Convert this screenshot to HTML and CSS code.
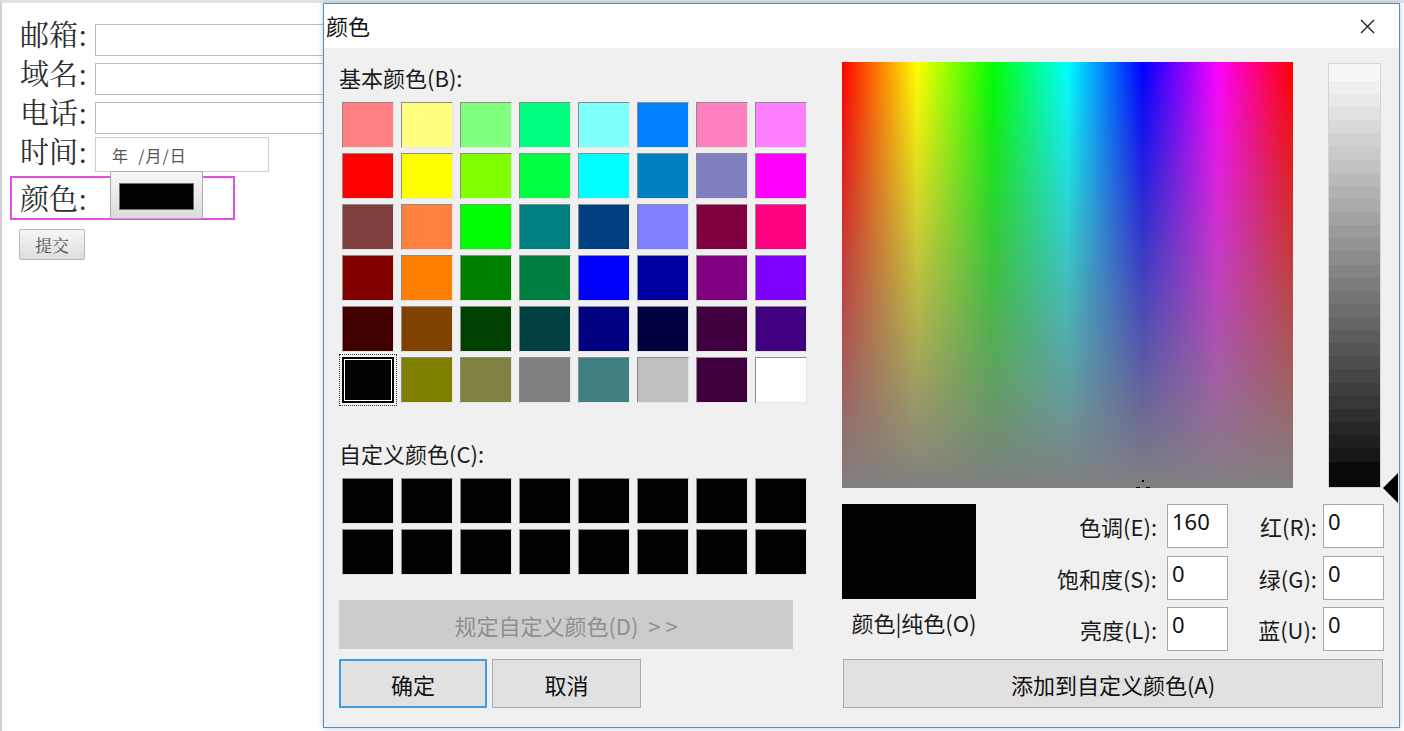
FILE: index.html
```html
<!DOCTYPE html>
<html lang="zh-CN">
<head>
<meta charset="utf-8">
<title>颜色</title>
<link rel="stylesheet" href="styles.css">
</head>
<body>
<div class="page">
  <form class="form">
    <div class="row"><span class="lbl">邮箱:</span><input class="field" type="text"></div>
    <div class="row"><span class="lbl">域名:</span><input class="field" type="text"></div>
    <div class="row"><span class="lbl">电话:</span><input class="field" type="text"></div>
    <div class="row date-row"><span class="lbl">时间:</span><span class="field date">年&nbsp;&nbsp;/月/日</span></div>
    <div class="color-row"><span class="lbl">颜色:</span><span class="color-btn"><span class="color-chip"></span></span></div>
    <button class="submit" type="button">提交</button>
  </form>
</div>

<div class="dialog">
  <div class="titlebar">
    <span class="title">颜色</span>
    <svg class="close" viewBox="0 0 15 15"><path d="M1 1L14 14M14 1L1 14" stroke="#222" stroke-width="1.4" fill="none"/></svg>
  </div>
  <div class="dlg-body">
    <div class="left">
      <div class="caption">基本颜色(B):</div>
      <div class="swatches">
        <span class="sw" style="background:#ff8080"></span>
        <span class="sw" style="background:#ffff80"></span>
        <span class="sw" style="background:#80ff80"></span>
        <span class="sw" style="background:#00ff80"></span>
        <span class="sw" style="background:#80ffff"></span>
        <span class="sw" style="background:#0080ff"></span>
        <span class="sw" style="background:#ff80c0"></span>
        <span class="sw" style="background:#ff80ff"></span>

        <span class="sw" style="background:#ff0000"></span>
        <span class="sw" style="background:#ffff00"></span>
        <span class="sw" style="background:#80ff00"></span>
        <span class="sw" style="background:#00ff40"></span>
        <span class="sw" style="background:#00ffff"></span>
        <span class="sw" style="background:#0080c0"></span>
        <span class="sw" style="background:#8080c0"></span>
        <span class="sw" style="background:#ff00ff"></span>

        <span class="sw" style="background:#804040"></span>
        <span class="sw" style="background:#ff8040"></span>
        <span class="sw" style="background:#00ff00"></span>
        <span class="sw" style="background:#008080"></span>
        <span class="sw" style="background:#004080"></span>
        <span class="sw" style="background:#8080ff"></span>
        <span class="sw" style="background:#800040"></span>
        <span class="sw" style="background:#ff0080"></span>

        <span class="sw" style="background:#800000"></span>
        <span class="sw" style="background:#ff8000"></span>
        <span class="sw" style="background:#008000"></span>
        <span class="sw" style="background:#008040"></span>
        <span class="sw" style="background:#0000ff"></span>
        <span class="sw" style="background:#0000a0"></span>
        <span class="sw" style="background:#800080"></span>
        <span class="sw" style="background:#8000ff"></span>

        <span class="sw" style="background:#400000"></span>
        <span class="sw" style="background:#804000"></span>
        <span class="sw" style="background:#004000"></span>
        <span class="sw" style="background:#004040"></span>
        <span class="sw" style="background:#000080"></span>
        <span class="sw" style="background:#000040"></span>
        <span class="sw" style="background:#400040"></span>
        <span class="sw" style="background:#400080"></span>

        <span class="sw sel" style="background:#000000"></span>
        <span class="sw" style="background:#808000"></span>
        <span class="sw" style="background:#808040"></span>
        <span class="sw" style="background:#808080"></span>
        <span class="sw" style="background:#408080"></span>
        <span class="sw" style="background:#c0c0c0"></span>
        <span class="sw" style="background:#400040"></span>
        <span class="sw" style="background:#ffffff"></span>
      </div>
      <div class="caption custom-cap">自定义颜色(C):</div>
      <div class="swatches custom">
        <span class="sw"></span><span class="sw"></span><span class="sw"></span><span class="sw"></span>
        <span class="sw"></span><span class="sw"></span><span class="sw"></span><span class="sw"></span>
        <span class="sw"></span><span class="sw"></span><span class="sw"></span><span class="sw"></span>
        <span class="sw"></span><span class="sw"></span><span class="sw"></span><span class="sw"></span>
      </div>
      <div class="btn wide">规定自定义颜色(D)&nbsp; &gt; &gt;</div>
      <div class="btn-row">
        <div class="btn ok">确定</div>
        <div class="btn cancel">取消</div>
      </div>
    </div>

    <div class="right">
      <div class="pick-row">
        <div class="spectrum">
          <svg class="cross" viewBox="0 0 20 20"><rect x="9" y="2" width="2" height="2" fill="#000"/><rect x="3" y="9" width="4" height="2" fill="#000"/><rect x="13" y="9" width="4" height="2" fill="#000"/></svg>
        </div>
        <div class="lum"><span class="arrow"></span></div>
      </div>
      <div class="mid-row">
        <div class="preview-col">
          <div class="preview"></div>
          <div class="preview-lbl">颜色|纯色(O)</div>
        </div>
        <div class="fields">
          <span class="flbl">色调(E):</span><span class="fin">160</span>
          <span class="flbl r">红(R):</span><span class="fin">0</span>
          <span class="flbl">饱和度(S):</span><span class="fin">0</span>
          <span class="flbl r">绿(G):</span><span class="fin">0</span>
          <span class="flbl">亮度(L):</span><span class="fin">0</span>
          <span class="flbl r">蓝(U):</span><span class="fin">0</span>
        </div>
      </div>
      <div class="btn add">添加到自定义颜色(A)</div>
    </div>
  </div>
</div>
</body>
</html>
```

FILE: styles.css
```css
* { box-sizing: border-box; }
html, body { margin: 0; padding: 0; }
body {
  width: 1404px;
  height: 731px;
  overflow: hidden;
  position: relative;
  background: #fff;
  font-family: "Noto Sans CJK SC", "Noto Sans", sans-serif;
}

/* ---------- page form ---------- */
.page {
  height: 731px;
  border-top: 3px solid #e2e2e2;
  border-left: 2px solid #d2d2d2;
}
.form {
  display: flex;
  flex-direction: column;
  align-items: flex-start;
  padding: 17px 0 0 8px;
  margin: 0;
}
.row {
  display: flex;
  align-items: flex-start;
  height: 39px;
  padding-left: 10px;
}
.row.date-row { height: 35px; }
.lbl {
  font-family: "Noto Serif CJK SC", "Noto Sans CJK SC", serif;
  font-size: 29px;
  line-height: 26px;
  padding-top: 1px;
  color: #2e2e2e;
  width: 75px;
  flex: none;
}
.field {
  margin: 4px 0 0 0;
  width: 240px;
  height: 32px;
  border: 1px solid #bdbdbd;
  background: #fff;
  padding: 0;
  outline: none;
}
.field.date {
  margin-top: 0;
  width: 174px;
  height: 35px;
  display: flex;
  align-items: center;
  padding-left: 16px;
  font-size: 16px;
  letter-spacing: 1px;
  color: #555;
  border-color: #cfcfcf;
}
.color-row {
  display: flex;
  align-items: flex-start;
  width: 225px;
  height: 44px;
  margin-top: 4px;
  padding-left: 8px;
  border: 2px solid #e24fe2;
}
.color-row .lbl { align-self: center; padding-top: 0; line-height: 30px; }
.color-btn {
  margin: -7px 0 0 15px;
  width: 93px;
  height: 48px;
  border: 1px solid #ababab;
  border-radius: 2px;
  background: linear-gradient(#f7f7f7, #dcdcdc);
  display: flex;
  align-items: center;
  justify-content: center;
  flex: none;
}
.color-chip {
  width: 75px;
  height: 27px;
  background: #000;
  border: 1px solid #707070;
  margin-top: 3px;
}
.submit {
  margin: 9px 0 0 9px;
  width: 66px;
  height: 31px;
  border: 1px solid #b8b8b8;
  border-radius: 2px;
  background: linear-gradient(#f6f6f6, #dedede);
  font-family: "Noto Serif CJK SC", "Noto Sans CJK SC", serif;
  font-size: 17px;
  color: #555;
  padding: 0;
}

/* ---------- dialog window ---------- */
.dialog {
  position: absolute;
  left: 323px;
  top: 3px;
  width: 1077px;
  height: 725px;
  border: 1px solid #4a92d2;
  background: #f0f0f0;
  box-shadow: 0 0 5px rgba(0, 0, 0, 0.22);
  display: flex;
  flex-direction: column;
  color: #1a1a1a;
}
.titlebar {
  flex: none;
  height: 44px;
  background: #fff;
  display: flex;
  align-items: center;
  justify-content: space-between;
  padding: 0 24px 0 2px;
}
.title { font-size: 22px; line-height: 30px; color: #111; margin-top: -2px; }
.close { width: 15px; height: 15px; display: block; }

.dlg-body {
  display: flex;
  padding: 14px 0 0 15px;
}
.left { width: 503px; flex: none; }
.caption { font-size: 22px; line-height: 30px; color: #1a1a1a; }
.swatches {
  display: grid;
  grid-template-columns: repeat(8, 52px);
  grid-auto-rows: 46px;
  column-gap: 7px;
  row-gap: 5px;
  margin: 10px 0 0 3px;
}
.sw {
  display: block;
  border: 1px solid;
  border-color: #8c8c8c #e6e6e6 #e6e6e6 #8c8c8c;
}
.sw.sel {
  border: 2px solid #000;
  box-shadow: inset 0 0 0 1px #fff;
  outline: 1px dotted #333;
  outline-offset: 2px;
}
.custom .sw { background: #000; }
.custom-cap { margin-top: 35px; }

.btn {
  height: 49px;
  display: flex;
  align-items: center;
  justify-content: center;
  font-size: 22px;
  background: #e1e1e1;
  border: 1px solid #adadad;
  color: #111;
}
.btn.wide {
  width: 454px;
  margin-top: 25px;
  background: #cccccc;
  border-color: #cccccc;
  color: #8f8f8f;
}
.btn-row { display: flex; gap: 5px; margin-top: 10px; }
.btn.ok { width: 148px; border: 2px solid #3d9ee0; }
.btn.cancel { width: 149px; }

.right { width: 542px; flex: none; }
.pick-row { display: flex; align-items: flex-start; }
.spectrum {
  position: relative;
  overflow: hidden;
  width: 451px;
  height: 426px;
  flex: none;
  background:
    linear-gradient(to bottom, rgba(128, 128, 128, 0), #808080),
    linear-gradient(to right, #ff0000, #ffff00 16.67%, #00ff00 33.33%, #00ffff 50%, #0000ff 66.67%, #ff00ff 83.33%, #ff0000);
}
.cross {
  position: absolute;
  left: 291px;
  top: 416px;
  width: 20px;
  height: 20px;
}
.lum {
  position: relative;
  margin: 1px 0 0 35px;
  width: 53px;
  height: 425px;
  flex: none;
  border: 1px solid #d4d4d4;
  background: linear-gradient(to bottom,
    rgb(248,248,248) 0 4%,
    rgb(240,240,240) 4% 7.1%,
    rgb(233,233,233) 7.1% 10.2%,
    rgb(225,225,225) 10.2% 13.3%,
    rgb(217,217,217) 13.3% 16.4%,
    rgb(209,209,209) 16.4% 19.5%,
    rgb(202,202,202) 19.5% 22.6%,
    rgb(194,194,194) 22.6% 25.7%,
    rgb(186,186,186) 25.7% 28.8%,
    rgb(178,178,178) 28.8% 31.9%,
    rgb(171,171,171) 31.9% 35%,
    rgb(163,163,163) 35% 38.1%,
    rgb(155,155,155) 38.1% 41.2%,
    rgb(147,147,147) 41.2% 44.3%,
    rgb(140,140,140) 44.3% 47.4%,
    rgb(132,132,132) 47.4% 50.5%,
    rgb(124,124,124) 50.5% 53.6%,
    rgb(116,116,116) 53.6% 56.7%,
    rgb(109,109,109) 56.7% 59.8%,
    rgb(101,101,101) 59.8% 62.9%,
    rgb(93,93,93) 62.9% 66%,
    rgb(85,85,85) 66% 69.1%,
    rgb(78,78,78) 69.1% 72.2%,
    rgb(70,70,70) 72.2% 75.3%,
    rgb(62,62,62) 75.3% 78.4%,
    rgb(55,55,55) 78.4% 81.5%,
    rgb(47,47,47) 81.5% 84.6%,
    rgb(39,39,39) 84.6% 87.7%,
    rgb(31,31,31) 87.7% 90.8%,
    rgb(24,24,24) 90.8% 94%,
    rgb(10,10,10) 94% 100%);
}
.arrow {
  position: absolute;
  left: 54px;
  top: 409px;
  width: 0;
  height: 0;
  border-top: 15px solid transparent;
  border-bottom: 15px solid transparent;
  border-right: 15px solid #000;
}
.mid-row { display: flex; margin-top: 16px; }
.preview-col { width: 144px; flex: none; }
.preview { width: 134px; height: 95px; background: #000; }
.preview-lbl {
  margin-top: 8px;
  font-size: 22px;
  line-height: 30px;
  text-align: center;
  white-space: nowrap;
}
.fields {
  flex: 1;
  display: grid;
  grid-template-columns: 1fr 61px 95px 61px;
  grid-auto-rows: 44px;
  row-gap: 7.5px;
}
.flbl {
  align-self: center;
  text-align: right;
  font-size: 22px;
  line-height: 30px;
  padding-right: 10px;
  white-space: nowrap;
}
.flbl.r { padding-right: 6px; }
.fin {
  background: #fff;
  border: 1px solid #a8a8a8;
  font-family: "Noto Sans", sans-serif;
  font-size: 22px;
  line-height: 26px;
  padding: 3px 0 0 4px;
  color: #111;
}
.btn.add { width: 540px; margin: 8px 0 0 1px; }
```
